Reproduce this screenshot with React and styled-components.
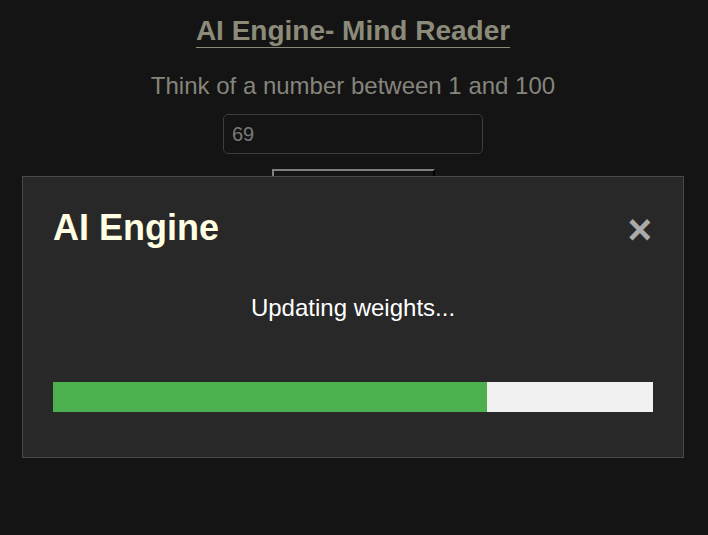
import React from "react";
import styled, { createGlobalStyle } from "styled-components";

const GlobalStyle = createGlobalStyle`
  html, body {
    margin: 0;
    padding: 0;
    background: #141414;
    font-family: "Liberation Sans", Arial, sans-serif;
  }
`;

const Page = styled.div`
  display: flex;
  flex-direction: column;
  align-items: center;
  padding: 15px 2px 0 0;
  min-height: 535px;
  box-sizing: border-box;
`;

const Heading = styled.h1`
  margin: 0;
  font-size: 28px;
  font-weight: bold;
  color: #8c8b7a;
  text-decoration: underline;
  text-decoration-thickness: 1px;
  text-underline-offset: 7px;
`;

const Prompt = styled.p`
  margin: 25px 0 14px;
  font-size: 24px;
  color: #86857c;
`;

const NumberInput = styled.input`
  width: 260px;
  height: 40px;
  box-sizing: border-box;
  padding: 0 8px;
  background: #141414;
  border: 1px solid #3c3c3c;
  border-radius: 5px;
  color: #7a7a78;
  font-size: 20px;
  font-family: inherit;
  outline: none;
`;

const GuessButton = styled.button`
  margin-top: 15px;
  width: 163px;
  height: 40px;
  background: #141414;
  border: 2px outset #2c2c2c;
  color: #888;
  font-size: 18px;
  font-family: inherit;
`;

const Overlay = styled.div`
  position: fixed;
  left: 22px;
  top: 176px;
  width: 662px;
  box-sizing: border-box;
  padding: 30px 30px 45px;
  background: #282828;
  border: 1px solid #4a4a4a;
`;

const ModalHeader = styled.div`
  display: flex;
  align-items: center;
  justify-content: space-between;
  height: 41px;
`;

const ModalTitle = styled.h2`
  margin: 0;
  font-size: 36px;
  font-weight: bold;
  color: #fffde2;
`;

const CloseButton = styled.span`
  font-size: 42px;
  font-weight: bold;
  line-height: 1;
  color: #aaaaaa;
  margin: 5px 1px 0 0;
  cursor: pointer;
`;

const Status = styled.p`
  margin: 46px 0 60px;
  text-align: center;
  font-size: 24px;
  color: #ffffff;
`;

const Track = styled.div`
  height: 30px;
  background: #f0f0f0;
`;

const Fill = styled.div`
  height: 100%;
  background: #4caf50;
`;

export default function App() {
  const progress = 72.3;
  return (
    <>
      <GlobalStyle />
      <Page>
        <Heading>AI Engine- Mind Reader</Heading>
        <Prompt>Think of a number between 1 and 100</Prompt>
        <NumberInput type="text" defaultValue="69" />
        <GuessButton>Read my mind</GuessButton>
      </Page>
      <Overlay>
        <ModalHeader>
          <ModalTitle>AI Engine</ModalTitle>
          <CloseButton>&times;</CloseButton>
        </ModalHeader>
        <Status>Updating weights...</Status>
        <Track>
          <Fill style={{ width: `${progress}%` }} />
        </Track>
      </Overlay>
    </>
  );
}
